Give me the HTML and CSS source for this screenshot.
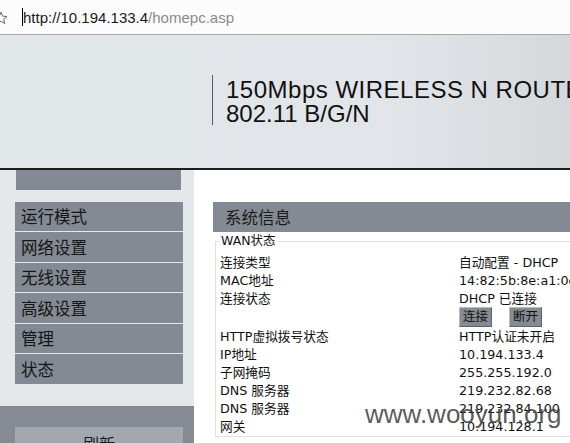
FILE: index.html
```html
<!DOCTYPE html>
<html>
<head>
<meta charset="utf-8">
<link rel="stylesheet" href="styles.css">
</head>
<body>
<div class="page">
  <div class="addr">
    <svg class="star" width="14" height="14" viewBox="0 0 14 14"><path d="M7 1.2 L8.7 5.2 L13 5.5 L9.7 8.3 L10.7 12.6 L7 10.3 L3.3 12.6 L4.3 8.3 L1 5.5 L5.3 5.2 Z" fill="none" stroke="#6a6a6a" stroke-width="1"/></svg>
    <span class="caret"></span>
    <span class="url">http://10.194.133.4<span class="path">/homepc.asp</span></span>
  </div>
  <div class="header">
    <div class="brand">
      <div class="brand-line wide">150Mbps WIRELESS N ROUTER</div>
      <div class="brand-line">802.11 B/G/N</div>
    </div>
  </div>
  <div class="main">
    <div class="sidebar">
      <div class="side-top">
        <div class="logo-block"></div>
        <ul class="menu">
          <li class="menu-item">运行模式</li>
          <li class="menu-item">网络设置</li>
          <li class="menu-item">无线设置</li>
          <li class="menu-item">高级设置</li>
          <li class="menu-item">管理</li>
          <li class="menu-item">状态</li>
        </ul>
      </div>
      <div class="side-bottom">
        <div class="refresh">刷新</div>
      </div>
    </div>
    <div class="content">
      <div class="title">系统信息</div>
      <fieldset class="wan">
        <legend>WAN状态</legend>
        <div class="row"><span class="lbl">连接类型</span><span class="val">自动配置 - DHCP</span></div>
        <div class="row"><span class="lbl">MAC地址</span><span class="val">14:82:5b:8e:a1:0c</span></div>
        <div class="row"><span class="lbl">连接状态</span><span class="val">DHCP 已连接</span></div>
        <div class="row btn-row"><span class="lbl"></span><span class="val btns"><span class="btn">连接</span><span class="btn">断开</span></span></div>
        <div class="row"><span class="lbl">HTTP虚拟拨号状态</span><span class="val">HTTP认证未开启</span></div>
        <div class="row"><span class="lbl">IP地址</span><span class="val">10.194.133.4</span></div>
        <div class="row"><span class="lbl">子网掩码</span><span class="val">255.255.192.0</span></div>
        <div class="row"><span class="lbl">DNS 服务器</span><span class="val">219.232.82.68</span></div>
        <div class="row"><span class="lbl">DNS 服务器</span><span class="val">219.232.84.100</span></div>
        <div class="row"><span class="lbl">网关</span><span class="val">10.194.128.1</span></div>
      </fieldset>
    </div>
  </div>
  <div class="watermark">www.wooyun.org</div>
</div>
</body>
</html>
```

FILE: styles.css
```css
html, body {
  margin: 0;
  padding: 0;
  overflow: hidden;
  background: #ffffff;
}
.page {
  position: relative;
  width: 570px;
  height: 443px;
  overflow: hidden;
}
.addr {
  height: 34px;
  border-bottom: 1px solid #a8a8a8;
  background: #fcfcfc;
  display: flex;
  align-items: center;
}
.star {
  margin-left: -6px;
  margin-top: 2px;
}
.caret {
  width: 1px;
  height: 18px;
  background: #000;
  margin-left: 14px;
}
.url {
  font-family: "Liberation Sans", Arial, sans-serif;
  font-size: 15px;
  color: #1a1a1a;
}
.path {
  color: #8a8a8a;
}
.header {
  height: 133px;
  border-bottom: 2px solid #1c1c1c;
  background: linear-gradient(to right, #e2e7ea 0%, #e1e5e9 70%, #d4d8db 100%);
  display: flex;
  align-items: flex-start;
}
.brand {
  margin-left: 212px;
  margin-top: 40px;
  height: 50px;
  box-sizing: border-box;
  padding-top: 3px;
  border-left: 1px solid #5a5a5a;
  padding-left: 13px;
  white-space: nowrap;
}
.brand-line {
  font-family: "Liberation Sans", Arial, sans-serif;
  font-size: 24px;
  line-height: 24px;
  color: #111;
}
.brand-line.wide {
  letter-spacing: 0.5px;
}
.main {
  display: flex;
  height: 273px;
}
.sidebar {
  width: 194px;
  flex: none;
  display: flex;
  flex-direction: column;
  background: #e4e8eb;
}
.side-top {
  height: 236px;
  flex: none;
}
.logo-block {
  margin-left: 16px;
  width: 165px;
  height: 20px;
  background: #848a93;
}
.menu {
  list-style: none;
  margin: 12px 0 0 15px;
  padding: 0;
  width: 168px;
  display: flex;
  flex-direction: column;
  gap: 1px;
}
.menu-item {
  height: 29px;
  background: #848a93;
  font-family: "Noto Sans CJK SC", sans-serif;
  font-size: 16.5px;
  line-height: 29px;
  color: #161616;
  padding-left: 6px;
}
.menu-item:nth-child(even) {
  height: 30px;
  line-height: 30px;
}
.side-bottom {
  flex: 1;
  background: #858a93;
  padding-top: 21px;
}
.refresh {
  margin-left: 15px;
  width: 168px;
  height: 30px;
  background: #a3a7ae;
  text-align: center;
  font-family: "Noto Sans CJK SC", sans-serif;
  font-size: 16px;
  line-height: 32px;
  color: #1a1a1a;
}
.content {
  flex: 1;
  background: #ffffff;
  padding-top: 32px;
  overflow: hidden;
}
.title {
  margin-left: 19px;
  width: 420px;
  height: 30px;
  background: #848a93;
  font-family: "Noto Sans CJK SC", sans-serif;
  font-size: 16.5px;
  line-height: 30px;
  color: #1a1a1a;
  padding-left: 12px;
  box-sizing: border-box;
}
.wan {
  margin: 2px 0 0 21px;
  width: 420px;
  box-sizing: border-box;
  border: 1px solid #e0e0e0;
  padding: 6px 0 0 4px;
  font-family: "DejaVu Sans", "Noto Sans CJK SC", sans-serif;
  font-size: 12.7px;
  color: #111;
}
.wan legend {
  padding: 0 1px;
  line-height: 14px;
  font-size: 12.5px;
  color: #111;
}
.row {
  display: flex;
  height: 18px;
  line-height: 18px;
  white-space: nowrap;
}
.lbl {
  width: 239px;
  flex: none;
}
.val {
  flex: none;
}
.btn-row {
  height: 20px;
  line-height: 20px;
}
.btns {
  display: flex;
  gap: 17px;
  margin-top: -1px;
}
.btn {
  width: 31px;
  height: 18px;
  line-height: 18px;
  text-align: center;
  background: #858a93;
  border: 1px solid #b8bcc0;
  border-right-color: #5d6168;
  border-bottom-color: #5d6168;
  color: #111;
  font-size: 12.5px;
}
.watermark {
  position: absolute;
  left: 365px;
  top: 401px;
  font-family: "Liberation Sans", Arial, sans-serif;
  font-size: 26px;
  line-height: 26px;
  color: rgba(60, 60, 60, 0.85);
  white-space: nowrap;
}
```
